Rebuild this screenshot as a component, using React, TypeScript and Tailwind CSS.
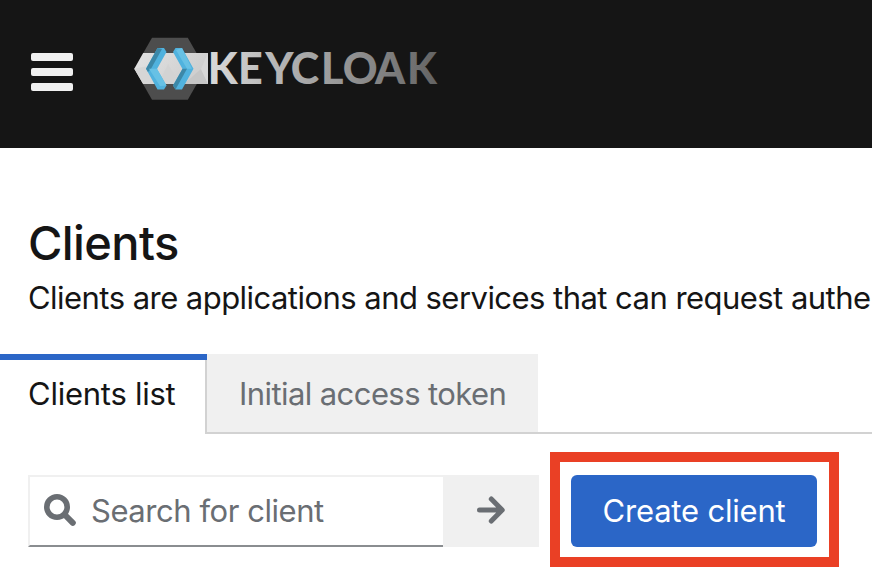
import React from "react";

function Logo() {
  return (
    <svg width="310" height="70" viewBox="130 33 310 70" role="img" aria-label="Keycloak">
      <defs>
        <linearGradient id="word" gradientUnits="userSpaceOnUse" x1="211" y1="0" x2="438" y2="0">
          <stop offset="0" stopColor="#d8d8d8" />
          <stop offset="0.3" stopColor="#b5b5b5" />
          <stop offset="0.65" stopColor="#8e8e8e" />
          <stop offset="1" stopColor="#636363" />
        </linearGradient>
        <linearGradient id="band" x1="0" y1="0" x2="1" y2="0.4">
          <stop offset="0" stopColor="#e3e3e3" />
          <stop offset="1" stopColor="#cecece" />
        </linearGradient>
      </defs>
      <path d="M152 37.7H187.8L205.5 68.7L187.8 99.7H152L134.3 68.7Z" fill="#4d4d4d" />
      <path d="M143.200 53H208V84H143.200L134.300 68.700Z" fill="url(#band)" />
      <path d="M134.300 68.700L148 66L156 84H143.200Z" fill="#d6d6d6" />
      <path d="M158 84L168 64L180 84Z" fill="#d3d3d3" />
      <path d="M184 84L201 69L208 84Z" fill="#c6c6c6" />
      <path d="M201 69L208 53V84Z" fill="#d7d7d7" />
      <path d="M157.500 48H164L166.500 52L157 69L166.500 85.500L164 89.500H157.500L146 68.700Z" fill="#50b2de" />
      <path d="M157.500 48L162 49L151 68.700L148 72L146 68.700Z" fill="#3c88a8" />
      <path d="M149 68.700H157L166.500 85.500L160 86Z" fill="#67c1e5" />
      <path d="M175.500 48H182L193.500 68.700L182 89.500H175.500L173 85.500L182.500 69L173 52Z" fill="#50b2de" />
      <path d="M176 50L182 48L192 68.700H187Z" fill="#67c1e5" />
      <path d="M182.500 68.700H187L175.500 89.500L173 85.500Z" fill="#3c88a8" />
      <text
        x="207.8 238 265.2 290.800 320.900 342.800 375 407"
        y="84"
        fill="url(#word)"
        className="font-['Lato',sans-serif] text-[43px] font-black"
      >
        KEYCLOAK
      </text>
    </svg>
  );
}

function Header() {
  return (
    <header className="flex h-[148px] items-start bg-[#151515]">
      <button aria-label="Menu" className="mt-[53px] ml-[31px] flex w-[42px] flex-col gap-[7px]">
        <span className="h-2 rounded-[2px] bg-[#f0f0f0]" />
        <span className="h-2 rounded-[2px] bg-[#f0f0f0]" />
        <span className="h-2 rounded-[2px] bg-[#f0f0f0]" />
      </button>
      <div className="mt-[33px] ml-[57px]">
        <Logo />
      </div>
    </header>
  );
}

function Tabs() {
  return (
    <div className="mt-9 flex h-20 text-[31px] leading-none whitespace-nowrap">
      <div className="flex w-[207px] flex-col border-t-[6px] border-[#2b66c7]">
        <div className="grow pl-7">
          <div className="h-full border-r-2 border-[#d2d2d2] pt-[18px]">
            <span className="tracking-[-0.25px]">Clients list</span>
          </div>
        </div>
      </div>
      <div className="w-[331px] border-b-2 border-[#d2d2d2] bg-[#f0f0f0] pt-6 pl-8 text-[#6a6e73]">
        <span className="tracking-[-0.58px]">Initial access token</span>
      </div>
      <div className="grow border-b-2 border-[#d2d2d2]" />
    </div>
  );
}

function Toolbar() {
  return (
    <div className="mt-[18px] flex items-start pl-7 text-[31px] leading-none whitespace-nowrap">
      <div className="mt-[23px] flex h-[72px] w-[415px] items-center border-t-2 border-b-2 border-l-2 border-t-[#f0f0f0] border-b-[#8a8d90] border-l-[#f0f0f0] pb-[2px] text-[#6a6e73]">
        <svg className="ml-[14px]" width="32" height="32" viewBox="0 0 32 32" fill="none" stroke="currentColor">
          <circle cx="13" cy="13" r="10.200" strokeWidth="5.600" />
          <path d="M21 21L28.800 28.800" strokeWidth="6" strokeLinecap="round" />
        </svg>
        <span className="ml-[15px] tracking-[-0.45px]">Search for client</span>
      </div>
      <button aria-label="Search" className="mt-[23px] flex h-[72px] w-24 items-center justify-center bg-[#f0f0f0] pb-[2px] text-[#6a6e73]">
        <svg width="28" height="28" viewBox="0 0 28 28" fill="none" stroke="currentColor" strokeWidth="5" strokeLinecap="round" strokeLinejoin="round">
          <path d="M2.500 14H25M14.300 3L25.200 14L14.300 25" />
        </svg>
      </button>
      <div className="ml-[11px] flex h-[115px] w-[289px] border-10 border-[#ea4025] pt-[13px] pl-[11px]">
        <button className="h-[72px] w-[246px] rounded-[6px] bg-[#2b66c7] pb-[2px] text-white">
          <span className="tracking-[-0.2px]">Create client</span>
        </button>
      </div>
    </div>
  );
}

export default function App() {
  return (
    <div className="h-[582px] w-[872px] overflow-hidden bg-white font-['Inter','Liberation_Sans',sans-serif] text-[#151515]">
      <Header />
      <h1 className="mt-[71px] ml-7 text-[47px] leading-[47px] font-medium tracking-[-0.6px]">Clients</h1>
      <p className="mt-[11px] ml-7 text-[31px] leading-[41px] tracking-[-0.54px] whitespace-nowrap">
        Clients are applications and services that can request authe
      </p>
      <Tabs />
      <Toolbar />
    </div>
  );
}
